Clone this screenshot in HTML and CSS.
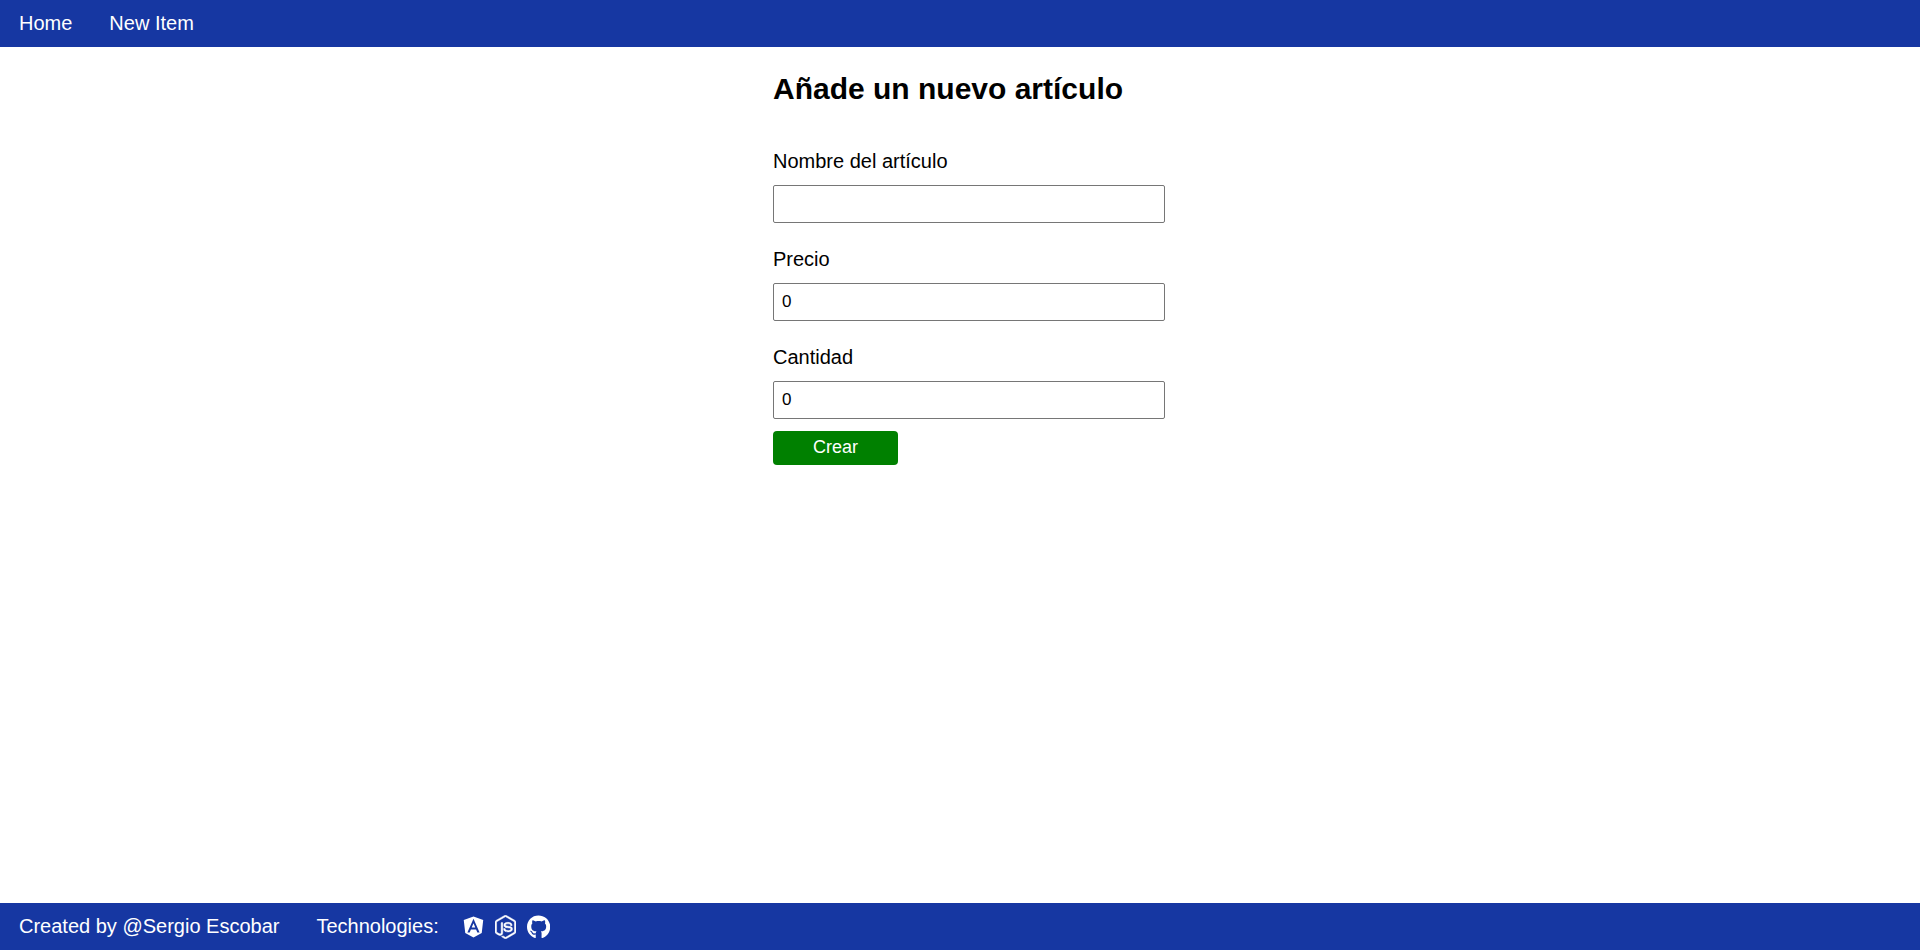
FILE: index.html
```html
<!DOCTYPE html>
<html lang="es">
<head>
  <meta charset="utf-8">
  <title>Nuevo artículo</title>
  <link rel="stylesheet" href="styles.css">
</head>
<body>
  <nav class="bar">
    <a class="bar-link" href="#home">Home</a>
    <a class="bar-link" href="#new">New Item</a>
  </nav>
  <main class="content">
    <form class="item-form">
      <h1 class="title">Añade un nuevo artículo</h1>
      <div class="field">
        <label for="name">Nombre del artículo</label>
        <input class="text-box" id="name" type="text">
      </div>
      <div class="field">
        <label for="price">Precio</label>
        <input class="text-box" id="price" type="text" inputmode="decimal" value="0">
      </div>
      <div class="field">
        <label for="amount">Cantidad</label>
        <input class="text-box" id="amount" type="text" inputmode="numeric" value="0">
      </div>
      <button class="submit" type="button">Crear</button>
    </form>
  </main>
  <footer class="bar">
    <span>Created by @Sergio Escobar</span>
    <div class="tech">
      <span>Technologies:</span>
      <div class="icons">
        <svg class="icon" viewBox="0 0 448 512" role="img" aria-label="Angular"><path d="M185.7 268.1h76.2l-38.1-91.6-38.1 91.6zM223.8 32L16 106.4l31.8 275.7 176 97.9 176-97.9 31.8-275.7zM354 373.8h-48.6l-26.2-65.4H168.6l-26.2 65.4H93.7L223.8 81.5z"/></svg>
        <svg class="icon icon-outline" viewBox="0 0 448 512" role="img" aria-label="Node.js"><path d="M224 508c-6.7 0-13.5-1.8-19.4-5.2l-61.7-36.5c-9.2-5.2-4.7-7-1.7-8 12.3-4.3 14.8-5.2 27.9-12.7 1.4-.8 3.2-.5 4.6.4l47.4 28.1c1.7 1 4.1 1 5.7 0l184.7-106.6c1.7-1 2.8-3 2.8-5V149.3c0-2.1-1.1-4-2.9-5.1L226.8 37.7c-1.7-1-4-1-5.7 0L36.6 144.3c-1.8 1-2.9 3-2.9 5.1v213.1c0 2 1.1 4 2.9 4.9l50.6 29.2c27.5 13.7 44.3-2.4 44.3-18.7V167.5c0-3 2.4-5.3 5.4-5.3h23.4c2.9 0 5.4 2.3 5.4 5.3V378c0 36.6-20 57.6-54.7 57.6-10.7 0-19.1 0-42.5-11.6l-48.4-27.9C8.1 389.2.7 376.3.7 362.4V149.3c0-13.8 7.4-26.8 19.4-33.7L204.6 9c11.7-6.6 27.2-6.6 38.8 0l184.7 106.7c12 6.9 19.4 19.8 19.4 33.7v213.1c0 13.8-7.4 26.7-19.4 33.7L243.4 502.8c-5.9 3.4-12.6 5.2-19.4 5.2zm149.1-210.1c0-39.9-27-50.5-83.7-58-57.4-7.6-63.2-11.5-63.2-24.9 0-11.1 4.9-25.9 47.4-25.9 37.9 0 51.9 8.2 57.7 33.8.5 2.4 2.7 4.2 5.2 4.2h24c1.5 0 2.9-.6 3.9-1.7s1.5-2.6 1.4-4.1c-3.7-44.1-33-64.6-92.2-64.6-52.7 0-84.1 22.2-84.1 59.5 0 40.4 31.3 51.6 81.8 56.6 60.5 5.9 65.2 14.8 65.2 26.7 0 20.6-16.6 29.4-55.5 29.4-48.9 0-59.6-12.3-63.2-36.6-.4-2.6-2.6-4.5-5.3-4.5h-23.9c-3 0-5.3 2.4-5.3 5.3 0 31.1 16.9 68.2 97.8 68.2 58.4-.1 92-23.2 92-63.4z"/></svg>
        <svg class="icon" viewBox="0 0 496 512" role="img" aria-label="GitHub"><path d="M165.9 397.4c0 2-2.3 3.6-5.2 3.6-3.3.3-5.6-1.3-5.6-3.6 0-2 2.3-3.6 5.2-3.6 3-.3 5.6 1.3 5.6 3.6zm-31.1-4.5c-.7 2 1.3 4.3 4.3 4.9 2.6 1 5.6 0 6.2-2s-1.3-4.3-4.3-5.2c-2.6-.7-5.5.3-6.2 2.3zm44.2-1.7c-2.9.7-4.9 2.6-4.6 4.9.3 2 2.9 3.3 5.9 2.6 2.9-.7 4.9-2.6 4.6-4.6-.3-1.9-3-3.2-5.9-2.9zM244.8 8C106.1 8 0 113.3 0 252c0 110.9 69.8 205.8 169.5 239.2 12.8 2.3 17.3-5.6 17.3-12.1 0-6.2-.3-40.4-.3-61.4 0 0-70 15-84.7-29.8 0 0-11.4-29.1-27.8-36.6 0 0-22.9-15.7 1.6-15.4 0 0 24.9 2 38.6 25.8 21.9 38.6 58.6 27.5 72.9 20.9 2.3-16 8.8-27.1 16-33.7-55.9-6.2-112.3-14.3-112.3-110.5 0-27.5 7.6-41.3 23.6-58.9-2.6-6.5-11.1-33.3 2.6-67.9 20.9-6.5 69 27 69 27 20-5.6 41.5-8.5 62.8-8.5s42.8 2.9 62.8 8.5c0 0 48.1-33.6 69-27 13.7 34.7 5.2 61.4 2.6 67.9 16 17.7 25.8 31.5 25.8 58.9 0 96.5-58.9 104.2-114.8 110.5 9.2 7.9 17 22.9 17 46.4 0 33.7-.3 75.4-.3 83.6 0 6.5 4.6 14.4 17.3 12.1C428.2 457.8 496 362.9 496 252 496 113.3 383.5 8 244.8 8z"/></svg>
      </div>
    </div>
  </footer>
</body>
</html>
```

FILE: styles.css
```css
body {
  margin: 0;
  min-height: 100vh;
  display: flex;
  flex-direction: column;
  background: #fff;
  color: #000;
  font-family: "Liberation Sans", Arial, sans-serif;
  font-size: 20px;
  line-height: 23px;
}

.bar {
  display: flex;
  align-items: center;
  gap: 37px;
  padding: 12px 19px;
  background: #1637a2;
  color: #fff;
}

.bar-link {
  color: inherit;
  text-decoration: none;
}

.content {
  flex: 1;
  display: flex;
  justify-content: center;
}

.item-form {
  width: 374px;
}

.title {
  margin: 24px 0 43px;
  font-size: 30px;
  line-height: 36px;
}

.field {
  display: flex;
  flex-direction: column;
  gap: 12px;
  margin-bottom: 25px;
}

.field:last-of-type {
  margin-bottom: 12px;
}

/* The box is as wide as the form plus its own padding and border. */
.text-box {
  width: 100%;
  height: 20px;
  padding: 8px;
  border: 1px solid #767676;
  border-radius: 2px;
  background: #fff;
  color: #000;
  font-family: inherit;
  font-size: 17px;
}

.submit {
  width: 125px;
  padding: 6px 0 7px;
  border: 0;
  border-radius: 4px;
  background: #008000;
  color: #fff;
  font-family: inherit;
  font-size: 18px;
  line-height: 21px;
}

.tech {
  display: flex;
  align-items: center;
  gap: 24px;
}

.icons {
  display: flex;
  gap: 11px;
  height: 23px;
  align-items: center;
}

.icon {
  height: 24px;
  fill: currentColor;
}

.icon-outline {
  stroke: currentColor;
  stroke-width: 10;
}
```
